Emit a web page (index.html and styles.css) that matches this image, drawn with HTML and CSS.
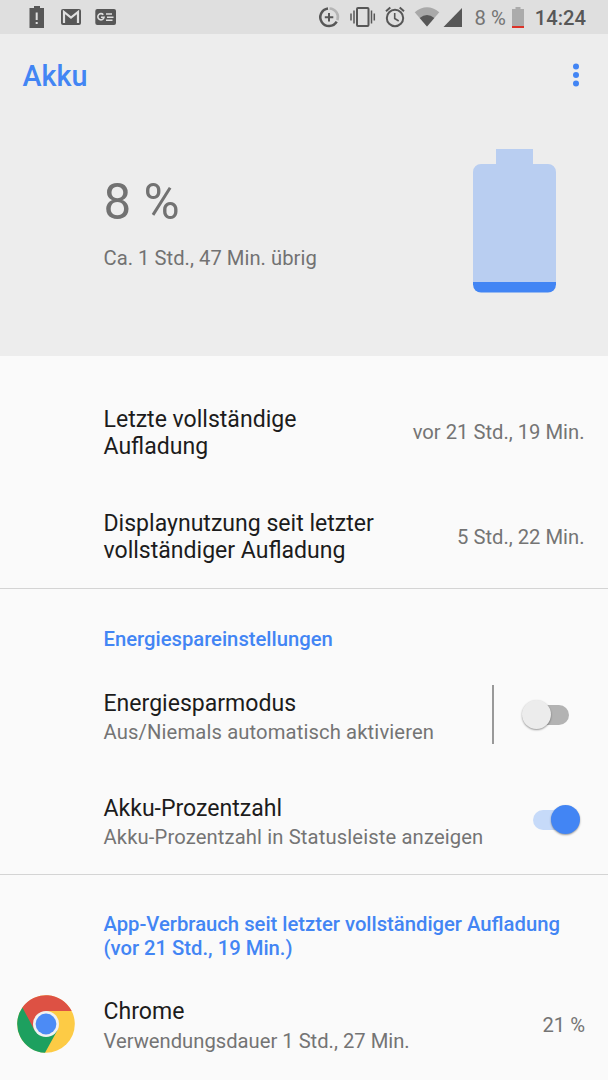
FILE: index.html
```html
<!DOCTYPE html>
<html lang="de">
<head>
<meta charset="utf-8">
<title>Akku</title>
<link rel="stylesheet" href="styles.css">
</head>
<body>
<header class="statusbar">
  <svg class="status-left" width="130" height="34" viewBox="0 0 130 34" fill="#575757">
    <path fill-rule="evenodd" d="M34 6h6v2h4v20H29.500V8H34zM35.700 12.500v7.500h2v-7.500zM35.700 22v2h2v-2z"/>
    <rect x="61" y="9" width="20" height="16" rx="2"/>
    <path d="M64 23V12l7 5.500 7-5.500v11" fill="none" stroke="#dfdfdf" stroke-width="2.200"/>
    <rect x="95.300" y="9" width="20.700" height="16" rx="2"/>
    <path d="M103.300 14.700a3.100 3.100 0 1 0 .7 2.600h-3M106 14h6M107 17.200h6.500M106 20.300h6.500" fill="none" stroke="#dfdfdf" stroke-width="1.600"/>
  </svg>
  <div class="status-right">
    <svg width="156" height="34" viewBox="310 0 156 34" fill="none" stroke="#575757" stroke-width="2">
      <path d="M329.500 8.400a8.800 8.800 0 0 1 7.900 11.800" stroke="#b5b5b5" stroke-width="2.500"/>
      <path d="M328 8.500a8.800 8.800 0 1 0 8.700 13.200" stroke-width="2.500"/>
      <path d="M329 13v8.500M324.800 17.200h8.500"/>
      <rect x="357" y="8" width="11.500" height="18" rx="1"/>
      <path d="M354 10.500v13M351 13.500v7M371.500 10.500v13M374.300 13.500v7" stroke-width="1.500"/>
      <circle cx="395" cy="18" r="8.200"/>
      <path d="M394.700 13v5.500l4 2.500" stroke-width="1.600"/>
      <path d="M386 11.200l4.300-3.600M404 11.200l-4.300-3.600"/>
      <path d="M427 26.500L414.700 12.300q12.300-10 24.600 0z" fill="#a9a9a9" stroke="none"/>
      <path d="M427 26.500l-7.300-8.500q7.300-6 14.600 0z" fill="#575757" stroke="none"/>
      <path d="M462 8v19h-18.500z" fill="#575757" stroke="none"/>
    </svg>
    <span class="status-percent">8 %</span>
    <svg class="status-battery" width="12" height="22" viewBox="0 0 12 22">
      <path d="M3.500 0h5v2H12v19H0V2h3.500z" fill="#ababab"/>
      <path d="M0 19h12v2H0z" fill="#dc3228"/>
    </svg>
    <span class="status-time">14:24</span>
  </div>
</header>
<section class="hero">
  <div class="appbar">
    <h1>Akku</h1>
    <svg width="8" height="26" viewBox="0 0 8 26" fill="#4285f4"><circle cx="4" cy="4.500" r="3"/><circle cx="4" cy="13" r="3"/><circle cx="4" cy="21.500" r="3"/></svg>
  </div>
  <div class="summary">
    <div>
      <div class="level">8 %</div>
      <div class="remaining">Ca. 1 Std., 47 Min. übrig</div>
    </div>
    <svg width="83" height="144" viewBox="0 0 83 144">
      <path d="M23 0h37v15h15a8 8 0 0 1 8 8v110H0V23a8 8 0 0 1 8-8h15z" fill="#b9cef1"/>
      <path d="M0 133h83v2.500a8 8 0 0 1-8 8H8a8 8 0 0 1-8-8z" fill="#4285f4"/>
    </svg>
  </div>
</section>
<main>
  <section class="group usage">
    <div class="row first"><div class="title">Letzte vollständige<br>Aufladung</div><div class="value">vor 21 Std., 19 Min.</div></div>
    <div class="row"><div class="title">Displaynutzung seit letzter<br>vollständiger Aufladung</div><div class="value">5 Std., 22 Min.</div></div>
  </section>
  <section class="group saving">
    <h2>Energiespareinstellungen</h2>
    <div class="row">
      <div class="text"><div class="title">Energiesparmodus</div><div class="sub">Aus/Niemals automatisch aktivieren</div></div>
      <div class="control"><span class="separator"></span><span class="switch"><span class="thumb"></span></span></div>
    </div>
    <div class="row">
      <div class="text"><div class="title">Akku-Prozentzahl</div><div class="sub">Akku-Prozentzahl in Statusleiste anzeigen</div></div>
      <div class="control"><span class="switch on"><span class="thumb"></span></span></div>
    </div>
  </section>
  <section class="group apps">
    <h2>App-Verbrauch seit letzter vollständiger Aufladung<br>(vor 21 Std., 19 Min.)</h2>
    <div class="row app">
      <svg class="app-icon" width="58" height="58" viewBox="-29 -29 58 58">
        <circle r="28.800" fill="#fdcb45"/>
        <path d="M0-13H25.700A28.800 28.800 0 0 0-23.600-16.500V-14L-11.300 7.500 0 0z" fill="#dd5144"/>
        <path d="M-23.600-16.500A28.800 28.800 0 0 0-1 28.800L11.300 6.500 0 0-11.300 6.500z" fill="#1da05f"/>
        <circle r="13" fill="#f1f1f1"/>
        <circle r="10.400" fill="#4c8bf5"/>
      </svg>
      <div class="text"><div class="title">Chrome</div><div class="sub">Verwendungsdauer 1 Std., 27 Min.</div></div>
      <div class="value">21 %</div>
    </div>
  </section>
</main>
</body>
</html>
```

FILE: styles.css
```css
* { box-sizing: border-box; }
body {
  margin: 0;
  width: 608px;
  height: 1080px;
  overflow: hidden;
  background: #fafafa;
  color: #1c1c1c;
  font-family: Roboto, sans-serif;
  font-size: 20.22px;
  line-height: 24px;
}
h1, h2 { margin: 0; font-weight: 500; color: #4285f4; }
.statusbar {
  display: flex;
  justify-content: space-between;
  height: 34px;
  background: #dfdfdf;
}
.status-right { display: flex; align-items: center; padding: 3px 22px 0 0; }
.status-right > svg:first-child { margin-top: -3px; }
.status-percent { margin: -1px 0 0 9px; color: #747474; }
.status-battery { margin: -1px 11px 0 6px; }
.status-time { margin-top: -1px; font-weight: 500; color: #575757; }
.hero { height: 322px; background: #ededed; }
.appbar {
  display: flex;
  align-items: center;
  justify-content: space-between;
  height: 82px;
  padding: 0 28px 0 22.500px;
}
h1 { padding-top: 2px; font-size: 28.700px; line-height: 34px; }
.summary {
  display: flex;
  justify-content: space-between;
  padding: 33px 52px 0 103.500px;
  color: #727272;
}
.level { margin-top: 23px; font-size: 49.300px; line-height: 60px; }
.remaining { margin-top: 14px; letter-spacing: .03px; }
.usage { height: 233px; padding-top: 23px; border-bottom: 1px solid #d4d4d4; }
.saving { height: 286px; padding-top: 38px; border-bottom: 1px solid #d4d4d4; }
.apps { padding-top: 37px; }
h2 { padding-left: 103.500px; font-size: 20.24px; line-height: 24px; }
.row {
  display: flex;
  align-items: center;
  justify-content: space-between;
  height: 105px;
  padding: 0 23.500px 0 103.500px;
}
.usage .value { padding-top: 1px; }
.usage .first .title { padding-top: 2px; }
.saving .row:nth-of-type(1) { margin-top: 11px; }
.saving .row { padding-right: 23px; }
.text { padding-top: 4px; }
.title { font-size: 23.050px; line-height: 27px; }
.sub { margin-top: 4px; color: #747474; }
.saving .text { padding-top: 5px; }
.saving .sub { margin-top: 3px; letter-spacing: .13px; }
.value { color: #747474; }
.control { display: flex; align-items: center; }
.separator { width: 2px; height: 59px; margin-right: 39px; background: #999; }
.switch {
  display: flex;
  align-items: center;
  width: 36px;
  height: 20px;
  margin-right: 16px;
  border-radius: 10px;
  background: #b3b3b3;
}
.thumb {
  width: 29px;
  height: 29px;
  border-radius: 50%;
  background: #ececec;
  box-shadow: 0 1px 2px rgba(0, 0, 0, .4);
}
.switch:not(.on) .thumb { margin-left: -11px; }
.switch.on { justify-content: flex-end; background: #c6daf9; }
.on .thumb { margin-right: -11px; background: #4285f4; }
.app { margin-top: 11px; padding: 0 23px 0 17px; }
.app-icon { margin-right: 28.500px; }
.app .value { margin-left: auto; padding-top: 2px; }
```
